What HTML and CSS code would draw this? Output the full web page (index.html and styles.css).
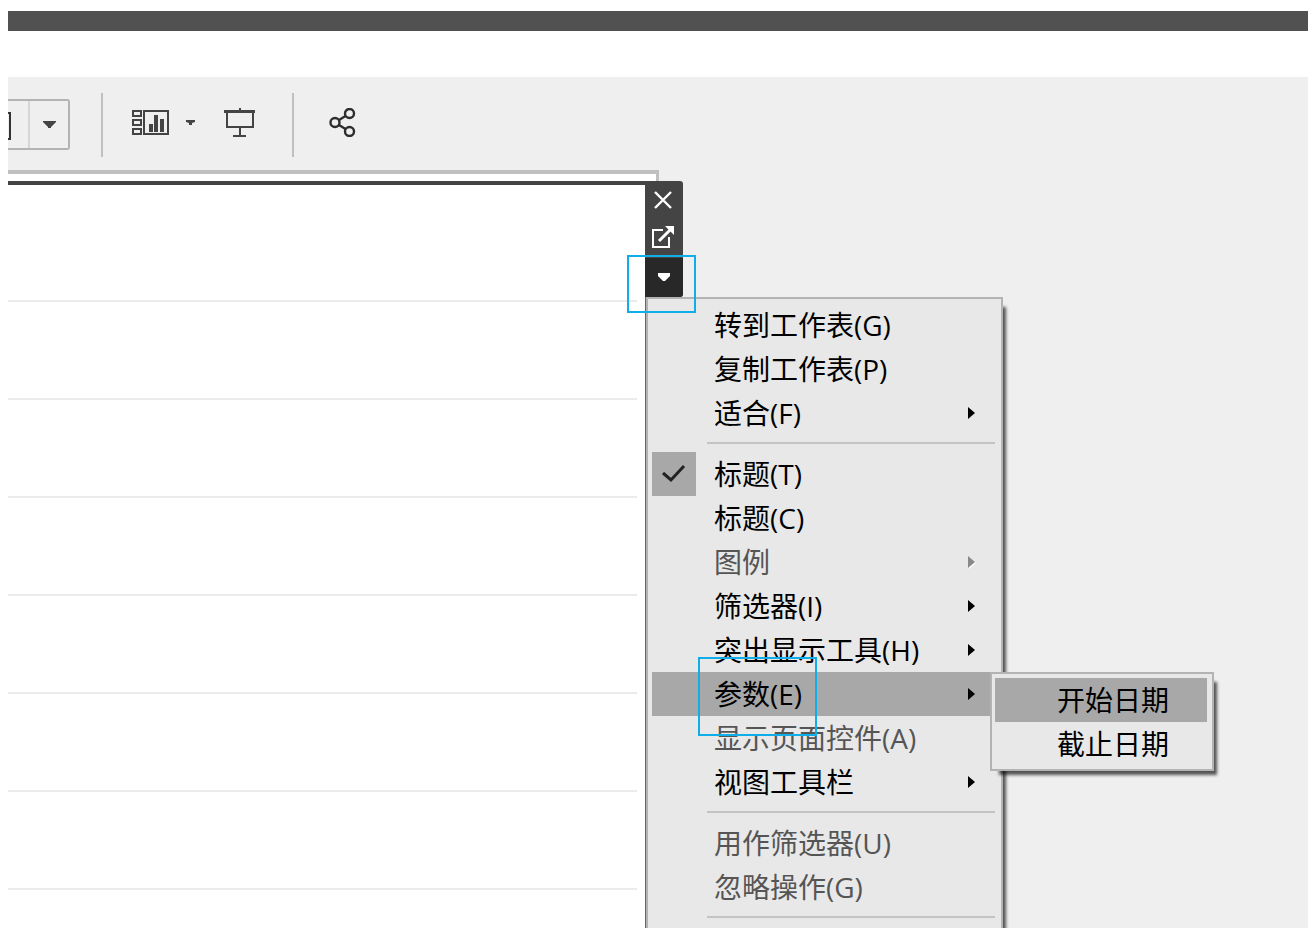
FILE: index.html
```html
<!DOCTYPE html>
<html lang="zh-CN">

<head>
    <meta charset="UTF-8" />
    <meta name="viewport" content="width=device-width, initial-scale=1.0" />
    <title>仪表板</title>
    <link rel="stylesheet" href="styles.css">
</head>

<body>
    <div class="app">
        <header class="title-bar"></header>

        <main class="workspace">
            <div class="toolbar">
                <div class="combo">
                    <button type="button" class="combo-main" aria-label="适合">
                        <svg width="3" height="28" viewBox="0 0 3 28">
                            <path d="M0 1H2V27H0" fill="none" stroke="#333" stroke-width="2" />
                        </svg>
                    </button>
                    <button type="button" class="combo-arrow" aria-label="展开">
                        <svg width="13" height="7" viewBox="0 0 13 7">
                            <path d="M0 0H13V1L8 6V7H5V6L0 1Z" fill="#444" />
                        </svg>
                    </button>
                </div>
                <span class="divider"></span>
                <button type="button" class="tool tool-cards" aria-label="显示/隐藏卡">
                    <svg width="37" height="25" viewBox="0 0 37 25">
                        <g fill="none" stroke="#444" stroke-width="2">
                            <rect x="1" y="1" width="8" height="5" />
                            <rect x="1" y="10" width="8" height="5" />
                            <rect x="1" y="19" width="8" height="5" />
                            <rect x="12" y="1" width="24" height="23" />
                        </g>
                        <path d="M17 14h4v8h-4zM22 5h4v17h-4zM28 9h4v13h-4z" fill="#444" />
                    </svg>
                    <svg width="9" height="5" viewBox="0 0 9 5">
                        <path d="M0 0H9V2L6 3V5H3V3L0 2Z" fill="#444" />
                    </svg>
                </button>
                <button type="button" class="tool" aria-label="演示模式">
                    <svg width="31" height="29" viewBox="0 0 31 29">
                        <path d="M0 2H15V0H17V2H31V5H0ZM9 27H22V29H9ZM15 20H17V27H15Z" fill="#444" />
                        <rect x="3" y="4" width="26" height="15" fill="none" stroke="#444" stroke-width="2" />
                    </svg>
                </button>
                <span class="divider"></span>
                <button type="button" class="tool" aria-label="共享">
                    <svg width="27" height="29" viewBox="0 0 27 29">
                        <g fill="none" stroke="#2d2d2d" stroke-width="2.4">
                            <circle cx="6" cy="14.5" r="4.5" />
                            <circle cx="20.5" cy="5.5" r="4.5" />
                            <circle cx="20.5" cy="23.5" r="4.5" />
                            <path d="M10 12L16.5 8M10 17L16.5 21" />
                        </g>
                    </svg>
                </button>
            </div>

            <div class="dashboard-edge"></div>

            <div class="dashboard">
                <section class="sheet">
                    <div class="row"></div>
                    <div class="row"></div>
                    <div class="row"></div>
                    <div class="row"></div>
                    <div class="row"></div>
                    <div class="row"></div>
                    <div class="row"></div>
                </section>

                <div class="side">
                    <div class="sheet-actions">
                        <button type="button" class="action action-close" aria-label="关闭">
                            <svg width="18" height="18" viewBox="0 0 18 18">
                                <path d="M1 1L17 17M17 1L1 17" stroke="#fff" stroke-width="2.4" />
                            </svg>
                        </button>
                        <button type="button" class="action action-open" aria-label="转到工作表">
                            <svg width="22" height="22" viewBox="0 0 22 22">
                                <path d="M11 4H1V21H17V11" fill="none" stroke="#fff" stroke-width="2" />
                                <path d="M7 15L18 4" stroke="#fff" stroke-width="3" />
                                <path d="M13 0H22V9Z" fill="#fff" />
                            </svg>
                        </button>
                        <button type="button" class="action action-menu" aria-label="更多选项">
                            <svg width="12" height="8" viewBox="0 0 12 8">
                                <path d="M0 0H12V3L7 8H5L0 3Z" fill="#fff" />
                            </svg>
                            <span class="mark mark-arrow"></span>
                        </button>
                    </div>

                    <ul class="menu">
                        <li><button type="button" class="item">转到工作表(G)</button></li>
                        <li><button type="button" class="item">复制工作表(P)</button></li>
                        <li><button type="button" class="item has-sub">适合(F)</button></li>
                        <li class="line"></li>
                        <li>
                            <button type="button" class="item">
                                <span class="check">
                                    <svg width="24" height="20" viewBox="0 0 24 20">
                                        <path d="M1 9L9 16L22 2" fill="none" stroke="#222" stroke-width="3" />
                                    </svg>
                                </span>
                                标题(T)
                            </button>
                        </li>
                        <li><button type="button" class="item">标题(C)</button></li>
                        <li><button type="button" class="item has-sub" disabled>图例</button></li>
                        <li><button type="button" class="item has-sub">筛选器(I)</button></li>
                        <li><button type="button" class="item has-sub">突出显示工具(H)</button></li>
                        <li class="open">
                            <button type="button" class="item has-sub active">参数(E)</button>
                            <span class="mark mark-item"></span>
                            <ul class="submenu">
                                <li><button type="button" class="item active">开始日期</button></li>
                                <li><button type="button" class="item">截止日期</button></li>
                            </ul>
                        </li>
                        <li><button type="button" class="item" disabled>显示页面控件(A)</button></li>
                        <li><button type="button" class="item has-sub">视图工具栏</button></li>
                        <li class="line"></li>
                        <li><button type="button" class="item" disabled>用作筛选器(U)</button></li>
                        <li><button type="button" class="item" disabled>忽略操作(G)</button></li>
                        <li class="line"></li>
                    </ul>
                </div>
            </div>
        </main>
    </div>
</body>

</html>
```

FILE: styles.css
```css
* {
    margin: 0;
    padding: 0;
    box-sizing: border-box;
}

body {
    background: #fff;
    font-family: "Open Sans", "Noto Sans CJK SC", sans-serif;
    font-size: 28px;
    color: #000;
}

button {
    border: none;
    background: none;
    font: inherit;
    color: inherit;
    cursor: pointer;
}

svg {
    display: block;
    flex: none;
}

ul {
    list-style: none;
}

.app {
    height: 100vh;
    padding: 11px 4px 8px 8px;
    display: flex;
    flex-direction: column;
}

.title-bar {
    flex: none;
    height: 20px;
    margin-bottom: 46px;
    background: #515151;
}

.workspace {
    flex: 1;
    min-height: 0;
    display: flex;
    flex-direction: column;
    background: #efefef;
    overflow: hidden;
}

/* toolbar */
.toolbar {
    flex: none;
    height: 93px;
    padding: 16px 0 13px;
    display: flex;
    align-items: center;
}

.combo {
    display: flex;
    width: 62px;
    height: 51px;
    margin-bottom: 2px;
    border: 2px solid #b3b3b3;
    border-left: none;
    border-radius: 0 3px 3px 0;
}

.combo-main {
    width: 20px;
    padding-top: 4px;
}

.combo-arrow {
    flex: 1;
    display: flex;
    align-items: center;
    justify-content: center;
    border-left: 2px solid #d6d6d6;
}

.divider {
    width: 2px;
    height: 64px;
    margin: 0 29px 0 31px;
    background: #c0c0c0;
}

.tool {
    display: flex;
    align-items: center;
    padding: 0 6px 6px;
}

.tool-cards {
    gap: 17px;
    padding-left: 0;
    padding-right: 23px;
}

/* dashboard */
.dashboard-edge {
    flex: none;
    width: calc(49% + 14px);
    height: 11px;
    background: #fff;
    border-top: 4px solid #c0c0c0;
    border-right: 3px solid #c0c0c0;
}

.dashboard {
    flex: 1;
    min-height: 0;
    display: flex;
}

.sheet {
    width: 49%;
    padding-right: 8px;
    background: #fff;
    border-top: 4px solid #444;
    overflow: hidden;
}

.row {
    height: 98px;
    border-bottom: 2px solid #ebebeb;
}

.row:first-child {
    height: 117px;
}

.side {
    display: flex;
    flex-direction: column;
    border-left: 1px solid #666;
}

.sheet-actions {
    flex: none;
    width: 38px;
    margin-left: -1px;
    background: #444;
    border-radius: 0 3px 3px 0;
}

.action {
    position: relative;
    display: flex;
    align-items: center;
    justify-content: center;
    width: 100%;
    height: 39px;
}

.action-close {
    height: 38px;
    padding-right: 2px;
}

.action-open {
    padding: 0 2px 3px 0;
}

.action-menu {
    padding-bottom: 2px;
    background: #282828;
    border-radius: 0 0 3px 0;
}

/* blue frames around the controls to click */
.mark {
    position: absolute;
    border: 2px solid #0fadea;
    z-index: 2;
    pointer-events: none;
}

.mark-arrow {
    left: -18px;
    top: -3px;
    width: 69px;
    height: 58px;
}

.mark-item {
    left: 46px;
    top: -15px;
    width: 119px;
    height: 79px;
}

/* menus */
.menu,
.submenu {
    background: #e8e8e8;
    border: 2px solid #b3b3b3;
    box-shadow: 6px 7px 3px -3px rgba(0, 0, 0, 0.65);
}

.menu {
    flex: 1;
    width: 357px;
    padding: 4px;
    margin-bottom: -12px;
}

.item {
    position: relative;
    display: flex;
    align-items: center;
    width: 100%;
    height: 44px;
    padding-left: 62px;
    line-height: 44px;
    white-space: nowrap;
    text-align: left;
}

.item:disabled {
    color: #555;
    cursor: default;
}

.item.active {
    background: #a8a8a8;
}

.has-sub::after {
    content: "";
    margin-left: auto;
    margin-right: 22px;
    border: 6px solid transparent;
    border-left: 7px solid #000;
    border-right: none;
}

.has-sub:disabled::after {
    border-left-color: #888;
    filter: drop-shadow(1px 1px 0 #fff);
}

.check {
    position: absolute;
    left: 0;
    top: 0;
    width: 44px;
    height: 44px;
    display: flex;
    align-items: center;
    justify-content: center;
    background: #a8a8a8;
}

.line {
    height: 2px;
    margin: 7px 2px 8px 55px;
    background: #c3c3c3;
}

.open {
    position: relative;
}

.submenu {
    position: absolute;
    left: 338px;
    top: 0;
    z-index: 1;
    width: 224px;
    padding: 4px 5px 3px 3px;
}
```
